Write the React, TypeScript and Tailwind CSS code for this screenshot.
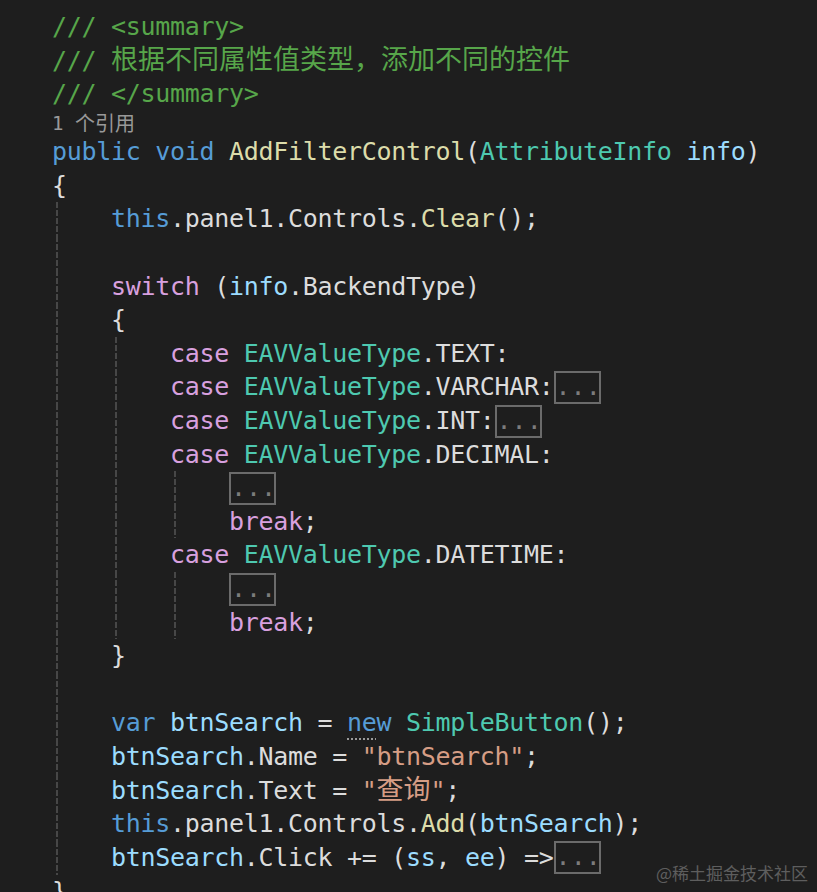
import React from 'react';

// colour classes for token kinds
const G = 'text-[#57a64a]'; // comment
const K = 'text-[#569cd6]'; // keyword
const C = 'text-[#d8a0df]'; // control keyword
const T = 'text-[#4ec9b0]'; // type
const M = 'text-[#dcdcaa]'; // method
const P = 'text-[#dcdcdc]'; // plain
const V = 'text-[#9cdcfe]'; // local / parameter
const S = 'text-[#d69d85]'; // string

type Tok = { t: string; c: string; cjk?: boolean; fold?: boolean; dots?: boolean };
type Line = { ind: number; g: number[]; toks: Tok[] };

const tk = (t: string, c: string = P): Tok => ({ t, c });
const cjk = (t: string, c: string): Tok => ({ t, c, cjk: true });
const fold: Tok = { t: '...', c: '', fold: true };

const lines: Line[] = [
    { ind: 0, g: [], toks: [tk('public', K), tk(' '), tk('void', K), tk(' '), tk('AddFilterControl', M), tk('('), tk('AttributeInfo', T), tk(' '), tk('info', V), tk(')')] },
    { ind: 0, g: [], toks: [tk('{')] },
    { ind: 1, g: [0], toks: [tk('this', K), tk('.panel1.Controls.'), tk('Clear', M), tk('();')] },
    { ind: 1, g: [0], toks: [] },
    { ind: 1, g: [0], toks: [tk('switch', C), tk(' ('), tk('info', V), tk('.BackendType)')] },
    { ind: 1, g: [0], toks: [tk('{')] },
    { ind: 2, g: [0, 1], toks: [tk('case', C), tk(' '), tk('EAVValueType', T), tk('.TEXT:')] },
    { ind: 2, g: [0, 1], toks: [tk('case', C), tk(' '), tk('EAVValueType', T), tk('.VARCHAR:'), fold] },
    { ind: 2, g: [0, 1], toks: [tk('case', C), tk(' '), tk('EAVValueType', T), tk('.INT:'), fold] },
    { ind: 2, g: [0, 1], toks: [tk('case', C), tk(' '), tk('EAVValueType', T), tk('.DECIMAL:')] },
    { ind: 3, g: [0, 1, 2], toks: [fold] },
    { ind: 3, g: [0, 1, 2], toks: [tk('break', C), tk(';')] },
    { ind: 2, g: [0, 1], toks: [tk('case', C), tk(' '), tk('EAVValueType', T), tk('.DATETIME:')] },
    { ind: 3, g: [0, 1, 2], toks: [fold] },
    { ind: 3, g: [0, 1, 2], toks: [tk('break', C), tk(';')] },
    { ind: 1, g: [0], toks: [tk('}')] },
    { ind: 1, g: [0], toks: [] },
    { ind: 1, g: [0], toks: [tk('var', K), tk(' '), tk('btnSearch', V), tk(' = '), { t: 'ne', c: K, dots: true }, tk('w', K), tk(' '), tk('SimpleButton', T), tk('();')] },
    { ind: 1, g: [0], toks: [tk('btnSearch', V), tk('.Name = '), tk('"btnSearch"', S), tk(';')] },
    { ind: 1, g: [0], toks: [tk('btnSearch', V), tk('.Text = '), tk('"', S), cjk('查询', S), tk('"', S), tk(';')] },
    { ind: 1, g: [0], toks: [tk('this', K), tk('.panel1.Controls.'), tk('Add', M), tk('('), tk('btnSearch', V), tk(');')] },
    { ind: 1, g: [0], toks: [tk('btnSearch', V), tk('.Click += ('), tk('ss', V), tk(', '), tk('ee', V), tk(') =>'), fold] },
    { ind: 0, g: [], toks: [tk('}')] },
];

const Token: React.FC<{ tok: Tok }> = ({ tok }) => {
    if (tok.fold) {
        return (
            <span className="inline-block align-middle h-[33px] w-[47px] -mt-[2px] border-2 border-[#6b6b6b] text-[#7c7c7c] leading-[27px] text-center tracking-[0px]">
                ...
            </span>
        );
    }
    if (tok.cjk) {
        return <span className={`${tok.c} font-['Noto_Sans_CJK_SC',sans-serif] text-[27px] leading-none tracking-normal`}>{tok.t}</span>;
    }
    if (tok.dots) {
        return <span className={`${tok.c} underline decoration-dotted decoration-[#9a9a9a] decoration-2 underline-offset-[7px]`}>{tok.t}</span>;
    }
    return <span className={tok.c}>{tok.t}</span>;
};

const CodeLine: React.FC<{ line: Line }> = ({ line }) => {
    const cells = Array.from({ length: line.ind }, (_, i) => i);
    return (
        <div className="flex h-[33.62px]">
            {cells.map((i) => (
                <div key={i} className="w-[59px] h-full shrink-0 pl-[4px]">
                    {line.g.includes(i) && (
                        <div className="w-[2px] h-full bg-[repeating-linear-gradient(to_bottom,#474747_0px,#474747_6px,transparent_6px,transparent_8px)]" />
                    )}
                </div>
            ))}
            <div className="whitespace-pre leading-[33.62px]">
                {line.toks.map((tok, i) => (
                    <Token key={i} tok={tok} />
                ))}
            </div>
        </div>
    );
};

const App: React.FC = () => {
    return (
        <div className="relative h-[892px] w-[817px] overflow-hidden bg-[#1e1e1e] pl-[52px] pt-[10px] font-['DejaVu_Sans_Mono','Noto_Sans_CJK_SC',monospace] text-[25px] tracking-[-0.3px] text-[#dcdcdc]">
            {/* doc comment */}
            <div className={`h-[33.62px] leading-[33.62px] whitespace-pre ${G}`}>/// &lt;summary&gt;</div>
            <div className={`h-[33.62px] leading-[33.62px] whitespace-pre ${G}`}>
                {'/// '}
                <span className="font-['Noto_Sans_CJK_SC',sans-serif] text-[27px] leading-none tracking-normal">根据不同属性值类型，添加不同的控件</span>
            </div>
            <div className={`h-[33.62px] leading-[33.62px] whitespace-pre ${G}`}>/// &lt;/summary&gt;</div>

            {/* codelens */}
            <div className="h-[24.3px] flex items-center whitespace-pre text-[#999999] text-[19px] tracking-normal">
                <span>1 </span>
                <span className="font-['Noto_Sans_CJK_SC',sans-serif] text-[20px]">个引用</span>
            </div>

            {lines.map((line, i) => (
                <CodeLine key={i} line={line} />
            ))}

            {/* watermark */}
            <div className="absolute bottom-[7px] right-[9px] font-['Noto_Sans_CJK_SC',sans-serif] text-[17px] tracking-normal text-[#5e5e5e]">
                @稀土掘金技术社区
            </div>
        </div>
    );
};

export default App;
